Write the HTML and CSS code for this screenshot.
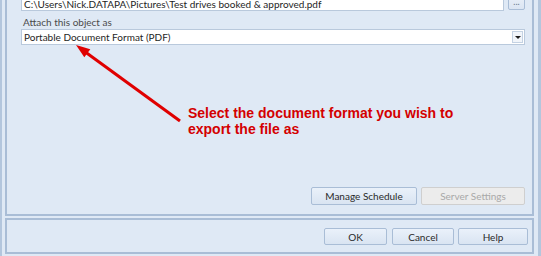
FILE: index.html
```html
<!DOCTYPE html>
<html lang="en">
<head>
  <meta charset="UTF-8" />
  <title>Schedule - Attach object</title>
  <link rel="stylesheet" href="styles.css">
</head>
<body>
  <div class="window">
    <section class="group">
      <div class="path-row">
        <div class="textbox">C:\Users\Nick.DATAPA\Pictures\Test drives booked &amp; approved.pdf</div>
        <div class="btn-browse">...</div>
      </div>
      <div class="field-label">Attach this object as</div>
      <div class="combo">
        <span class="combo-value">Portable Document Format (PDF)</span>
        <span class="combo-arrow"></span>
      </div>
      <div class="callout">
        <p>Select the document format you wish to<br>export the file as</p>
      </div>
      <div class="btn-row">
        <div class="btn btn-manage">Manage Schedule</div>
        <div class="btn btn-server disabled">Server Settings</div>
      </div>
    </section>
    <footer class="dialog-footer">
      <div class="btn btn-ok">OK</div>
      <div class="btn btn-cancel">Cancel</div>
      <div class="btn btn-help">Help</div>
    </footer>

    <!-- annotation arrow drawn over the dialog -->
    <svg class="annotation" width="541" height="256" viewBox="0 0 541 256">
      <line x1="84" y1="52.5" x2="178" y2="121" stroke="#e00000" stroke-width="3" />
      <polygon points="74,45 82.3,57.3 88.3,49.3" fill="#e00000" />
    </svg>
  </div>
</body>
</html>
```

FILE: styles.css
```css
* {
  box-sizing: border-box;
}
html, body {
  margin: 0;
  height: 256px;
  overflow: hidden;
}
body {
  background: #dfe9f5;
  font-family: 'Lato', sans-serif;
  font-size: 10px;
  color: #1e1e1e;
}
.window {
  position: relative;
  height: 256px;
  display: flex;
  flex-direction: column;
  border-left: 2px solid #b3c6dd;
  border-right: 3px solid #b3c6dd;
  padding: 0 4px 2px 3px;
}
.group {
  flex: 1;
  margin-top: -9px;
  border: 2px solid #a9bdd6;
  border-top: none;
  padding: 0 7px 9px 14px;
  display: flex;
  flex-direction: column;
}
.path-row {
  display: flex;
  gap: 4px;
  height: 20px;
}
.textbox {
  flex: 1;
  background: white;
  border: 1px solid #b9c9dc;
  padding: 0 2px;
  line-height: 12px;
  white-space: nowrap;
  overflow: hidden;
  display: flex;
  align-items: flex-end;
}
.btn-browse {
  width: 17px;
  height: 19px;
  border: 1px solid #a9bdd6;
  border-radius: 2px;
  background: linear-gradient(#eef3fa, #dbe5f2);
  color: #6a7a8c;
  font-size: 9px;
  text-align: center;
  line-height: 20px;
}
.field-label {
  margin-top: 4px;
  height: 14px;
  line-height: 14px;
  padding-left: 2px;
  color: #4b4b4b;
}
.combo {
  height: 16px;
  background: white;
  border: 1px solid #b9c9dc;
  display: flex;
  align-items: center;
  justify-content: space-between;
  padding: 0 1px 0 2px;
}
.combo-arrow {
  width: 11px;
  height: 12px;
  border: 1px solid #c4d2e3;
  background: #f1f5fa;
  position: relative;
}
.combo-arrow::after {
  content: "";
  position: absolute;
  left: 2px;
  top: 4px;
  border-left: 3px solid transparent;
  border-right: 3px solid transparent;
  border-top: 3px solid #1e1e1e;
}
.callout {
  flex: 1;
  padding: 60px 0 0 167px;
}
.callout p {
  margin: 0;
  font-family: 'Liberation Sans', Arial, sans-serif;
  font-weight: bold;
  font-size: 14px;
  line-height: 16px;
  color: #d40000;
}
.btn-row {
  display: flex;
  justify-content: flex-end;
  gap: 4px;
}
.btn {
  height: 18px;
  border: 1px solid #a9bdd6;
  border-radius: 2px;
  background: linear-gradient(#eaf1fa, #d9e4f2);
  text-align: center;
  line-height: 16px;
  color: #2a2a2a;
}
.btn.disabled {
  background: #ececec;
  border-color: #cfcfcf;
  color: #a9a9a9;
}
.btn-manage {
  width: 106px;
}
.btn-server {
  width: 104px;
}
.dialog-footer {
  margin-top: 2px;
  border: 2px solid #a9bdd6;
  padding: 8px 4px 7px 0;
  display: flex;
  justify-content: flex-end;
  gap: 4px;
}
.dialog-footer .btn {
  height: 17px;
}
.btn-ok {
  width: 63px;
  margin-right: 1px;
}
.btn-cancel {
  width: 62px;
}
.btn-help {
  width: 70px;
}
.annotation {
  position: absolute;
  top: 0;
  left: 0;
  pointer-events: none;
}
```
